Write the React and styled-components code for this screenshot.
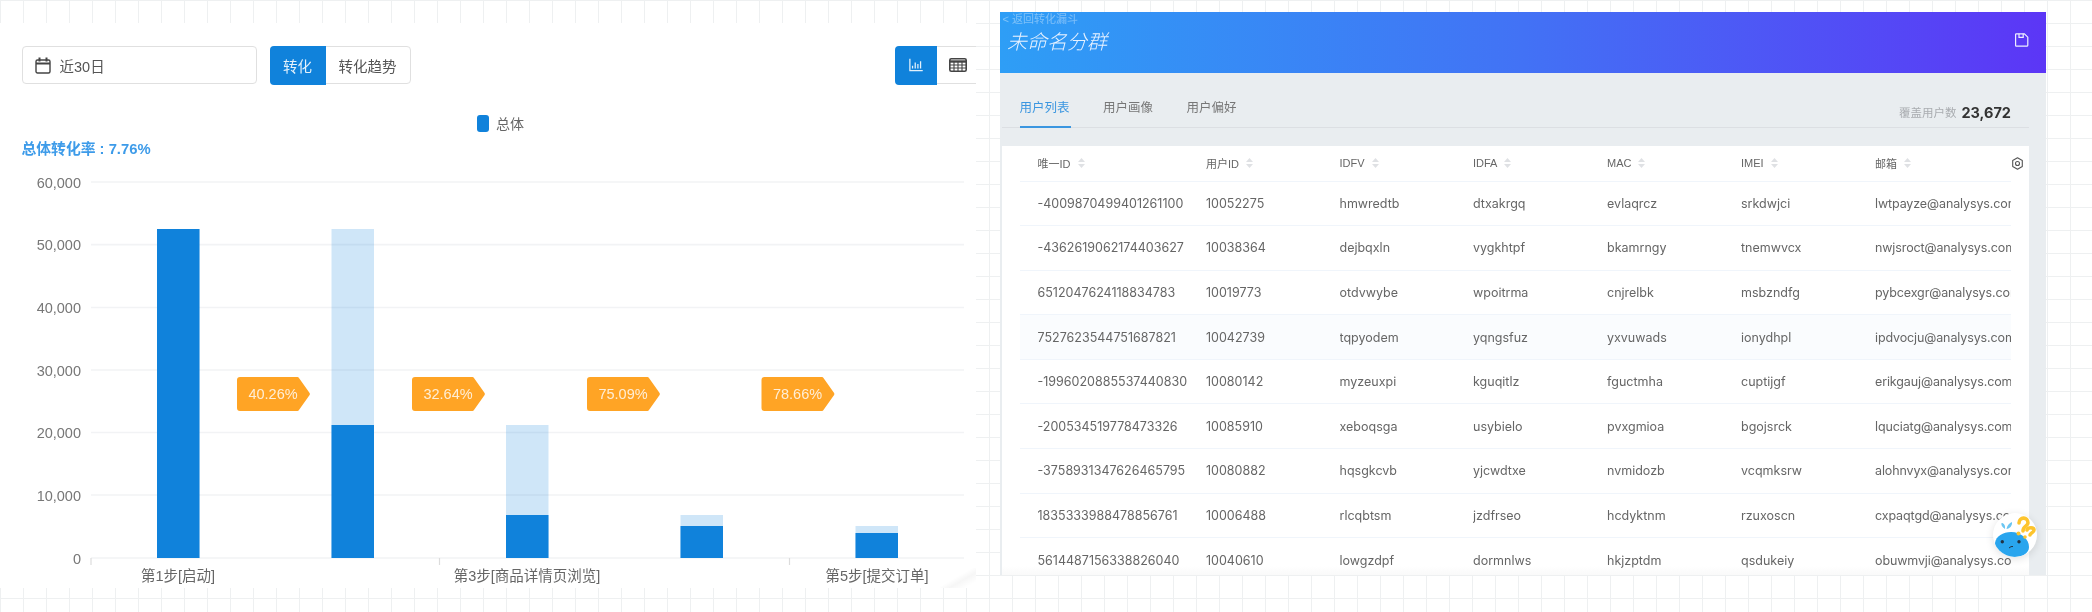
import React from "react";
import styled, { createGlobalStyle } from "styled-components";
import { AiOutlineBarChart } from "react-icons/ai";

const cjk = `"Noto Sans CJK SC"`;
const Global = createGlobalStyle`
  html, body { margin: 0; padding: 0; background: #fff; overflow: hidden; }
  body { font-family: "Liberation Sans", ${cjk}, sans-serif; }
`;

const Page = styled.div`
  width: 2092px;
  height: 612px;
  display: flex;
  align-items: flex-start;
  background-color: #fff;
  background-image: linear-gradient(#eef0f1 1px, transparent 1px), linear-gradient(90deg, #eef0f1 1px, transparent 1px);
  background-size: 23px 23px;
  filter: blur(0.65px);
`;

const Funnel = styled.section`
  position: relative;
  width: 976px;
  height: 565px;
  margin-top: 23px;
  background: #fff;
  overflow: hidden;
  flex: none;
`;
const CornerShadow = styled.div`
  position: absolute;
  right: 0;
  bottom: 0;
  width: 36px;
  height: 20px;
  background: linear-gradient(150deg, transparent 45%, rgba(0, 0, 0, 0.035) 62%, transparent 85%);
`;
const Toolbar = styled.div`
  display: flex;
  gap: 13.5px;
  padding: 23px 0 0 21.5px;
  margin-right: -20px;
  height: 38px;
`;
const DateBox = styled.div`
  width: 235px;
  box-sizing: border-box;
  display: flex;
  align-items: center;
  gap: 9px;
  padding-left: 12px;
  border: 1.5px solid #e0e0e0;
  border-radius: 4px;
  font-size: 14.5px;
  color: #555;
`;
const Segment = styled.div`
  display: flex;
  margin-left: ${(p) => (p.$push ? "auto" : 0)};
  border: 1.5px solid #e0e0e0;
  border-radius: 4px;
  box-sizing: border-box;
`;
const SegButton = styled.div`
  width: ${(p) => p.$w}px;
  margin: -1.5px 0;
  padding-right: ${(p) => p.$endGap || 0}px;
  box-sizing: border-box;
  display: flex;
  align-items: center;
  justify-content: center;
  font-size: 14.5px;
  background: ${(p) => (p.$on ? "#1082db" : "transparent")};
  color: ${(p) => (p.$on ? "#e3f1fb" : "#555")};
  border-radius: ${(p) => (p.$on ? "4px 0 0 4px" : 0)};
  margin-left: ${(p) => (p.$on ? "-1.5px" : 0)};
`;
const Legend = styled.div`
  display: flex;
  align-items: center;
  justify-content: center;
  gap: 7px;
  margin-top: 30px;
  padding-left: 25px;
  height: 18px;
  font-size: 14px;
  color: #666;
`;
const LegendSwatch = styled.span`
  width: 12px;
  height: 17px;
  border-radius: 3px;
  background: #1082db;
`;
const Rate = styled.div`
  margin: 7px 0 0 21.5px;
  line-height: 21px;
  height: 21px;
  font-size: 14.8px;
  font-weight: 700;
  color: #3d9be9;
`;
const ChartSvg = styled.svg`
  display: block;
  width: 976px;
  height: 428px;
  text {
    font-family: "Liberation Sans", ${cjk}, sans-serif;
  }
`;

const Segments = styled.section`
  position: relative;
  width: 1046px;
  height: 563px;
  margin: 12px 0 0 24px;
  background: #e9edf0;
  overflow: hidden;
  flex: none;
`;
const Header = styled.header`
  height: 61px;
  box-sizing: border-box;
  padding: 0 17px 0 2.5px;
  display: flex;
  justify-content: space-between;
  align-items: flex-start;
  color: #fff;
  background: linear-gradient(90deg, #2e9ef6 0%, #4272f5 50%, #5c36f6 100%);
`;
const HeaderTitles = styled.div`
  display: flex;
  flex-direction: column;
`;
const Back = styled.div`
  font-size: 11px;
  line-height: 14px;
  color: rgba(255, 255, 255, 0.38);
`;
const Title = styled.div`
  margin: 2px 0 0 4.5px;
  font-size: 20px;
  line-height: 26px;
  font-style: italic;
  font-weight: 300;
  font-family: ${cjk}, sans-serif;
  color: #e8f2ff;
`;
const SaveSlot = styled.div`
  display: flex;
  margin-top: 21px;
`;
const TabBar = styled.div`
  margin: 0 17px 0 2px;
  height: 55px;
  box-sizing: border-box;
  display: flex;
  align-items: flex-end;
  padding: 0 18px 0 17.5px;
  border-bottom: 1px solid #dcdfe3;
`;
const Tab = styled.div`
  margin-right: 32.5px;
  width: 51px;
  padding-bottom: 8px;
  margin-bottom: -1px;
  line-height: 20px;
  font-size: 12.5px;
  white-space: nowrap;
  color: ${(p) => (p.$on ? "#3b96e0" : "#777")};
  border-bottom: 2px solid ${(p) => (p.$on ? "#3b96e0" : "transparent")};
`;
const Coverage = styled.div`
  margin-left: auto;
  display: flex;
  align-items: center;
  gap: 5px;
  height: 30px;
  font-size: 11.5px;
  color: #a9acb0;
  b {
    font-size: 14.5px;
    color: #333;
    font-family: Inter, sans-serif;
    font-weight: 700;
  }
`;
const Card = styled.div`
  position: relative;
  margin: 18px 17px 0 2px;
  padding: 0 18px 0 17.5px;
  background: #fff;
  height: 450px;
  overflow: hidden;
`;
const Row = styled.div`
  display: grid;
  grid-template-columns: 186.5px 133.5px 133.5px 134px 134px 134px 136px;
  align-items: center;
  height: ${(p) => (p.$head ? "35.5px" : "44.6px")};
  box-sizing: border-box;
  border-bottom: 1.5px solid #f0f5fb;
  background: ${(p) => (p.$hover ? "#fafcfe" : "transparent")};
  color: #666;
  font-size: ${(p) => (p.$head ? "11px" : "12.5px")};
  font-family: ${(p) => (p.$head ? `"Liberation Sans", ${cjk}, sans-serif` : "Inter, sans-serif")};
`;
const Cell = styled.div`
  padding-left: ${(p) => (p.$first ? "18px" : 0)};
  letter-spacing: ${(p) => (p.$mail ? "-0.12px" : 0)};
  white-space: nowrap;
  overflow: hidden;
  display: flex;
  align-items: center;
  gap: 7px;
`;
const SettingsBtn = styled.div`
  position: absolute;
  top: 11px;
  right: 5px;
  display: flex;
`;
const Fade = styled.div`
  position: absolute;
  left: 0;
  right: 0;
  top: 420px;
  height: 10px;
  background: linear-gradient(rgba(245, 245, 245, 0), rgba(245, 245, 245, 0.6));
`;
const Mascot = styled.div`
  position: absolute;
  right: 9px;
  bottom: 18px;
  width: 44px;
  height: 44px;
  border-radius: 50%;
  background: #fff;
  box-shadow: 0 2px 8px rgba(0, 0, 0, 0.12);
  overflow: hidden;
  display: flex;
`;

const Calendar = () => (
  <svg width="16" height="17" viewBox="0 0 16 17" fill="none" stroke="#444" strokeWidth="1.4">
    <rect x="1" y="3" width="14" height="13" rx="1.500" />
    <path d="M1 6.500h14" strokeWidth="2" />
    <path d="M4.500 .5v4M11.500 .5v4" strokeWidth="2" />
  </svg>
);
const TableIcon = () => (
  <svg width="18" height="14" viewBox="0 0 18 14" fill="none" stroke="#444" strokeWidth="1.1">
    <rect x=".8" y=".8" width="16.400" height="12.400" rx="1.500" strokeWidth="1.600" />
    <path d="M1 3.500h16" strokeWidth="2.400" />
    <path d="M1 7h16M1 10h16M5 3v10M9 3v10M13 3v10" />
  </svg>
);
const Save = () => (
  <svg width="14" height="14" viewBox="0 0 14 14" fill="none" stroke="#eef" strokeWidth="1.2">
    <path d="M1.200 .8h8.200l3.400 3.400v8a1 1 0 0 1-1 1H1.200a.6.6 0 0 1-.6-.6V1.400a.6.6 0 0 1 .6-.6z" />
    <path d="M4 .8v3.600h4.200V.8" />
  </svg>
);
const Gear = () => (
  <svg width="13" height="13" viewBox="0 0 13 13" fill="none" stroke="#555" strokeWidth="1.100">
    <path d="M6.500 .8l4.800 2.700v6l-4.800 2.700-4.800-2.700v-6z" strokeLinejoin="round" />
    <circle cx="6.500" cy="6.500" r="2" />
  </svg>
);
const Sort = () => (
  <svg width="7" height="10" viewBox="0 0 7 10" fill="#dfe1e4">
    <path d="M3.500 0L7 4H0zM3.500 10L0 6h7z" />
  </svg>
);
const Whale = () => (
  <svg width="44" height="44" viewBox="0 0 44 44">
    <path d="M2 30C3 23 10 19 18 19C28 19 36 26 36 34C36 40 30 44 21 44C12 44 2 39 2 30Z" fill="#29a5ee" />
    <path d="M12 16c-3-2-4-4-3.500-6 2.500 0 4 2.500 3.500 6zM13.500 16c.5-3.500 3-6 5.500-7 .5 3.500-2 6.500-5.500 7z" fill="#6cc6f2" />
    <circle cx="9.300" cy="28.700" r="1.700" fill="#234" />
    <circle cx="26" cy="28.700" r="1.700" fill="#234" />
    <path d="M16 35q2-2 4-1.500" stroke="#234" strokeWidth="1" fill="none" />
    <g fill="none" stroke="#fdc42d" strokeWidth="3.600" strokeLinecap="round">
      <path d="M26 10c0-6 9-7 9 0 0 3-5 3-5 8" />
      <path d="M34 17c1-3 7-3 7 0 0 3-4 3-4 5" />
    </g>
    <circle cx="25.500" cy="20.500" r="2" fill="#fdc42d" />
    <circle cx="32" cy="24" r="1.800" fill="#fdc42d" />
  </svg>
);

const ticks = [
  ["60,000", 182],
  ["50,000", 244.6],
  ["40,000", 307.5],
  ["30,000", 370],
  ["20,000", 432.5],
  ["10,000", 495],
  ["0", 558],
];
const bars = [
  { x: 157, light: 229, dark: 229 },
  { x: 331.5, light: 229, dark: 425 },
  { x: 506, light: 425, dark: 515 },
  { x: 680.5, light: 515, dark: 526 },
  { x: 855.5, light: 526, dark: 533 },
];
const badges = [
  ["40.26%", 237],
  ["32.64%", 412],
  ["75.09%", 587],
  ["78.66%", 761.5],
];
const cats = [
  ["第1步[启动]", 178],
  ["第3步[商品详情页浏览]", 527],
  ["第5步[提交订单]", 877],
];

const Chart = () => (
  <ChartSvg viewBox="0 160 976 428">
    {ticks.map(([label, y]) => (
      <g key={label}>
        <line x1="91" x2="964" y1={y} y2={y} stroke="#f2f3f5" strokeWidth="1.600" />
        <text x="81" y={y + 5.5} textAnchor="end" fontSize="14.500" fill="#777">
          {label}
        </text>
      </g>
    ))}
    {[91, 439.5, 789.5].map((x) => (
      <line key={x} x1={x} x2={x} y1="558" y2="565" stroke="#dcdcdc" strokeWidth="1.200" />
    ))}
    {bars.map((b) => (
      <g key={b.x}>
        <rect x={b.x} y={b.light} width="42.500" height={558 - b.light} fill="#1082db" fillOpacity="0.2" />
        <rect x={b.x} y={b.dark} width="42.500" height={558 - b.dark} fill="#1082db" />
      </g>
    ))}
    {cats.map(([label, x]) => (
      <text key={label} x={x} y="581" textAnchor="middle" fontSize="14.500" fill="#666">
        {label}
      </text>
    ))}
    {badges.map(([label, x]) => (
      <g key={label} transform={`translate(${x} 377)`}>
        <path
          d="M3 0H60.500a1.500 1.500 0 0 1 1.300.8L72.600 16a2 2 0 0 1 0 2L61.800 33.200a1.500 1.500 0 0 1-1.300.8H3a3 3 0 0 1-3-3V3a3 3 0 0 1 3-3z"
          fill="#ffa425"
        />
        <text x="36" y="22" textAnchor="middle" fontSize="14.500" fill="#ffeed6">
          {label}
        </text>
      </g>
    ))}
  </ChartSvg>
);

const heads = ["唯一ID", "用户ID", "IDFV", "IDFA", "MAC", "IMEI", "邮箱"];
const rows = [
  ["-4009870499401261100", "10052275", "hmwredtb", "dtxakrgq", "evlaqrcz", "srkdwjci", "lwtpayze@analysys.com.cn"],
  ["-4362619062174403627", "10038364", "dejbqxln", "vygkhtpf", "bkamrngy", "tnemwvcx", "nwjsroct@analysys.com.cn"],
  ["6512047624118834783", "10019773", "otdvwybe", "wpoitrma", "cnjrelbk", "msbzndfg", "pybcexgr@analysys.com.cn"],
  ["7527623544751687821", "10042739", "tqpyodem", "yqngsfuz", "yxvuwads", "ionydhpl", "ipdvocju@analysys.com.cn"],
  ["-1996020885537440830", "10080142", "myzeuxpi", "kguqitlz", "fguctmha", "cuptijgf", "erikgauj@analysys.com.cn"],
  ["-200534519778473326", "10085910", "xeboqsga", "usybielo", "pvxgmioa", "bgojsrck", "lquciatg@analysys.com.cn"],
  ["-3758931347626465795", "10080882", "hqsgkcvb", "yjcwdtxe", "nvmidozb", "vcqmksrw", "alohnvyx@analysys.com.cn"],
  ["1835333988478856761", "10006488", "rlcqbtsm", "jzdfrseo", "hcdyktnm", "rzuxoscn", "cxpaqtgd@analysys.com.cn"],
  ["5614487156338826040", "10040610", "lowgzdpf", "dormnlws", "hkjzptdm", "qsdukeiy", "obuwmvji@analysys.com.cn"],
];

export default function App() {
  return (
    <>
      <Global />
      <Page>
        <Funnel>
          <Toolbar>
            <DateBox>
              <Calendar />
              近30日
            </DateBox>
            <Segment>
              <SegButton $on $w={56}>转化</SegButton>
              <SegButton $w={84}>转化趋势</SegButton>
            </Segment>
            <Segment $push>
              <SegButton $on $w={42}>
                <AiOutlineBarChart size={18} />
              </SegButton>
              <SegButton $w={58} $endGap={17}>
                <TableIcon />
              </SegButton>
            </Segment>
          </Toolbar>
          <Legend>
            <LegendSwatch />
            总体
          </Legend>
          <Rate>总体转化率 : 7.76%</Rate>
          <Chart />
          <CornerShadow />
        </Funnel>
        <Segments>
          <Header>
            <HeaderTitles>
              <Back>&lt; 返回转化漏斗</Back>
              <Title>未命名分群</Title>
            </HeaderTitles>
            <SaveSlot>
              <Save />
            </SaveSlot>
          </Header>
          <TabBar>
            <Tab $on>用户列表</Tab>
            <Tab>用户画像</Tab>
            <Tab>用户偏好</Tab>
            <Coverage>
              覆盖用户数 <b>23,672</b>
            </Coverage>
          </TabBar>
          <Card>
            <Row $head>
              {heads.map((h, i) => (
                <Cell key={h} $first={i === 0}>
                  {h}
                  <Sort />
                </Cell>
              ))}
            </Row>
            <SettingsBtn>
              <Gear />
            </SettingsBtn>
            {rows.map((r, i) => (
              <Row key={r[0]} $hover={i === 3}>
                {r.map((c, j) => (
                  <Cell key={j} $first={j === 0} $mail={j === 6}>
                    {c}
                  </Cell>
                ))}
              </Row>
            ))}
            <Fade />
          </Card>
          <Mascot>
            <Whale />
          </Mascot>
        </Segments>
      </Page>
    </>
  );
}
